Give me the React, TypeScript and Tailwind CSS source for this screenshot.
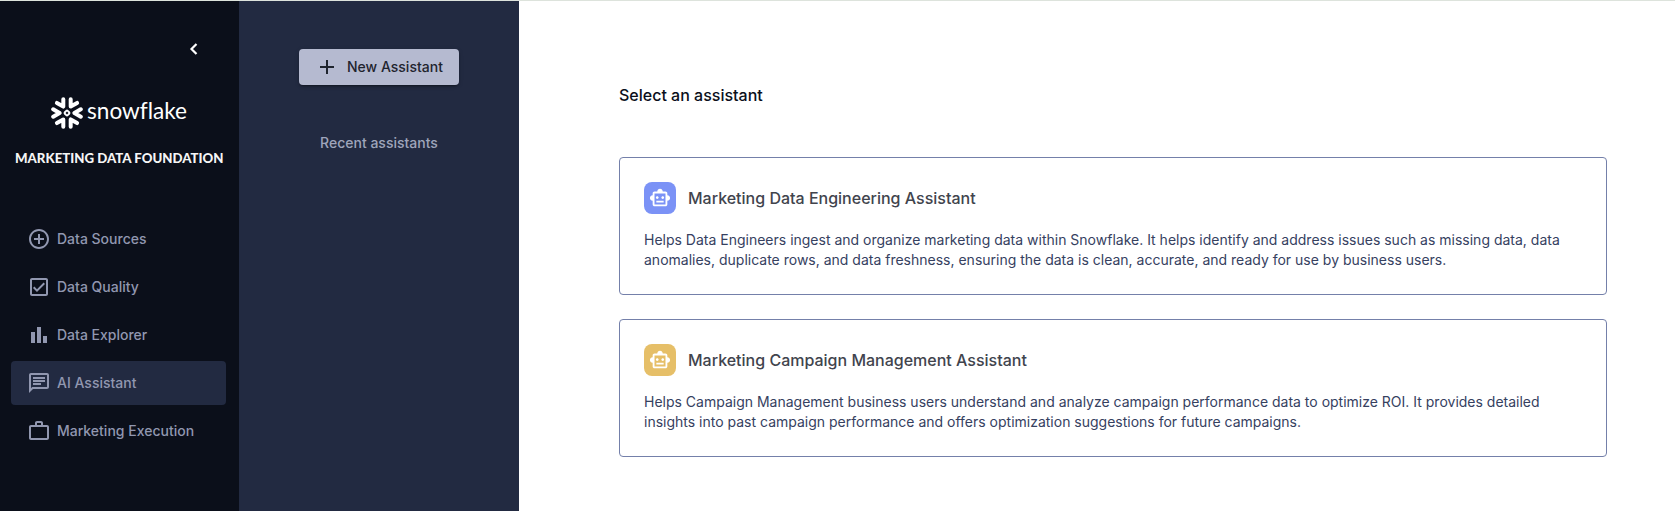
import type { ReactNode } from "react";
import {
  MdAdd,
  MdAddCircleOutline,
  MdBarChart,
  MdOutlineChat,
  MdOutlineCheckBox,
  MdOutlineSmartToy,
  MdOutlineWorkOutline,
} from "react-icons/md";

function SnowflakeMark() {
  const arms = [0, 60, 120, 180, 240, 300];
  return (
    <svg viewBox="-16 -16 32 32" className="size-8 shrink-0" fill="none" stroke="white" strokeLinecap="round" strokeLinejoin="round">
      {arms.map((a) => (
        <path key={a} d="M13.8 -3.7 L7.4 0 L13.8 3.7" strokeWidth="4" transform={`rotate(${a})`} />
      ))}
      <rect x="-2" y="-2" width="4" height="4" rx="1" strokeWidth="1.9" transform="rotate(45)" />
    </svg>
  );
}

const navItems: { label: string; icon: ReactNode; active?: boolean }[] = [
  { label: "Data Sources", icon: <MdAddCircleOutline size={24} /> },
  { label: "Data Quality", icon: <MdOutlineCheckBox size={24} /> },
  { label: "Data Explorer", icon: <MdBarChart size={24} /> },
  { label: "AI Assistant", icon: <MdOutlineChat size={24} />, active: true },
  { label: "Marketing Execution", icon: <MdOutlineWorkOutline size={24} /> },
];

function Sidebar() {
  return (
    <aside className="flex w-[239px] shrink-0 flex-col bg-[#0b0f1a]">
      <div className="flex h-24 justify-end pr-10 pt-[41px]">
        <svg viewBox="0 0 10 14" className="h-[14px] w-[10px]" fill="none" stroke="white" strokeWidth="2.2">
          <path d="M7.5 2 L2.5 7 L7.5 12" />
        </svg>
      </div>
      <div className="flex h-8 items-center gap-1 pl-[51px]">
        <SnowflakeMark />
        <svg viewBox="0 0 101 32" className="h-8 w-[101px] overflow-visible">
          <text
            x="0"
            y="22"
            fill="white"
            fontFamily="Lato, sans-serif"
            fontSize="23"
            textLength="100"
            lengthAdjust="spacingAndGlyphs"
            className="[font-variant-ligatures:none]"
          >
            snowflake
          </text>
        </svg>
      </div>
      <div className="mt-[19px] flex h-5 items-center justify-center">
        <svg viewBox="0 0 209 20" className="h-5 w-[209px] overflow-visible">
          <text
            x="0"
            y="15"
            fill="#f5f5f5"
            fontFamily="Lato, sans-serif"
            fontWeight="900"
            fontSize="13"
            textLength="208.5"
            lengthAdjust="spacingAndGlyphs"
          >
            MARKETING DATA FOUNDATION
          </text>
        </svg>
      </div>
      <nav className="mt-[49px] flex flex-col gap-1 pl-[11px] pr-[13px]">
        {navItems.map((item) => (
          <a
            key={item.label}
            className={
              item.active
                ? "flex h-11 items-center gap-[6px] rounded bg-[#222a41] pl-4 text-[#9197b0]"
                : "flex h-11 items-center gap-[6px] rounded pl-4 text-[#9197b0]"
            }
          >
            {item.icon}
            <span className="whitespace-nowrap text-sm font-medium">{item.label}</span>
          </a>
        ))}
      </nav>
    </aside>
  );
}

function AssistantPanel() {
  return (
    <section className="flex w-[280px] shrink-0 flex-col items-center bg-[#222a41] pt-12">
      <button className="flex h-9 w-40 items-center rounded bg-[#b5bad0] pl-4 text-[#1f242e] shadow-[0_3px_1px_-2px_rgba(0,0,0,0.2),0_2px_2px_rgba(0,0,0,0.14),0_1px_5px_rgba(0,0,0,0.12)]">
        <MdAdd size={24} />
        <span className="ml-2 whitespace-nowrap text-sm font-medium">New Assistant</span>
      </button>
      <h2 className="mt-[48px] text-sm font-medium leading-5 text-[#9fa5bb]">Recent assistants</h2>
    </section>
  );
}

function AssistantCard({ title, lines, iconClass }: { title: string; lines: string[]; iconClass: string }) {
  return (
    <article className="h-[138px] rounded border border-[#7480aa] px-6 pt-6">
      <div className="flex items-center gap-3">
        <div className={iconClass}>
          <MdOutlineSmartToy size={22} />
        </div>
        <h3 className="text-base font-medium text-[#41444d]">{title}</h3>
      </div>
      <p className="mt-4 text-sm leading-5 text-[#36415f]">
        {lines.map((line) => (
          <span key={line} className="block whitespace-nowrap">{line}</span>
        ))}
      </p>
    </article>
  );
}

export default function App() {
  return (
    <div className="flex h-[511px] w-full flex-col overflow-hidden bg-white font-['Inter',sans-serif] antialiased">
      <div className="h-px shrink-0 bg-[#dde3dc]" />
      <div className="flex min-h-0 flex-1">
        <Sidebar />
        <AssistantPanel />
        <main className="flex-1 pl-[100px] pr-[68px] pt-[82px]">
          <h1 className="text-base font-medium leading-6 text-[#0b0f1b]">Select an assistant</h1>
          <div className="mt-[50px] flex flex-col gap-6">
            <AssistantCard
              title="Marketing Data Engineering Assistant"
              iconClass="flex size-8 items-center justify-center rounded-lg bg-[#7b92f6] text-white"
              lines={[
                "Helps Data Engineers ingest and organize marketing data within Snowflake. It helps identify and address issues such as missing data, data",
                "anomalies, duplicate rows, and data freshness, ensuring the data is clean, accurate, and ready for use by business users.",
              ]}
            />
            <AssistantCard
              title="Marketing Campaign Management Assistant"
              iconClass="flex size-8 items-center justify-center rounded-lg bg-[#e6bf68] text-white"
              lines={[
                "Helps Campaign Management business users understand and analyze campaign performance data to optimize ROI. It provides detailed",
                "insights into past campaign performance and offers optimization suggestions for future campaigns.",
              ]}
            />
          </div>
        </main>
      </div>
    </div>
  );
}
